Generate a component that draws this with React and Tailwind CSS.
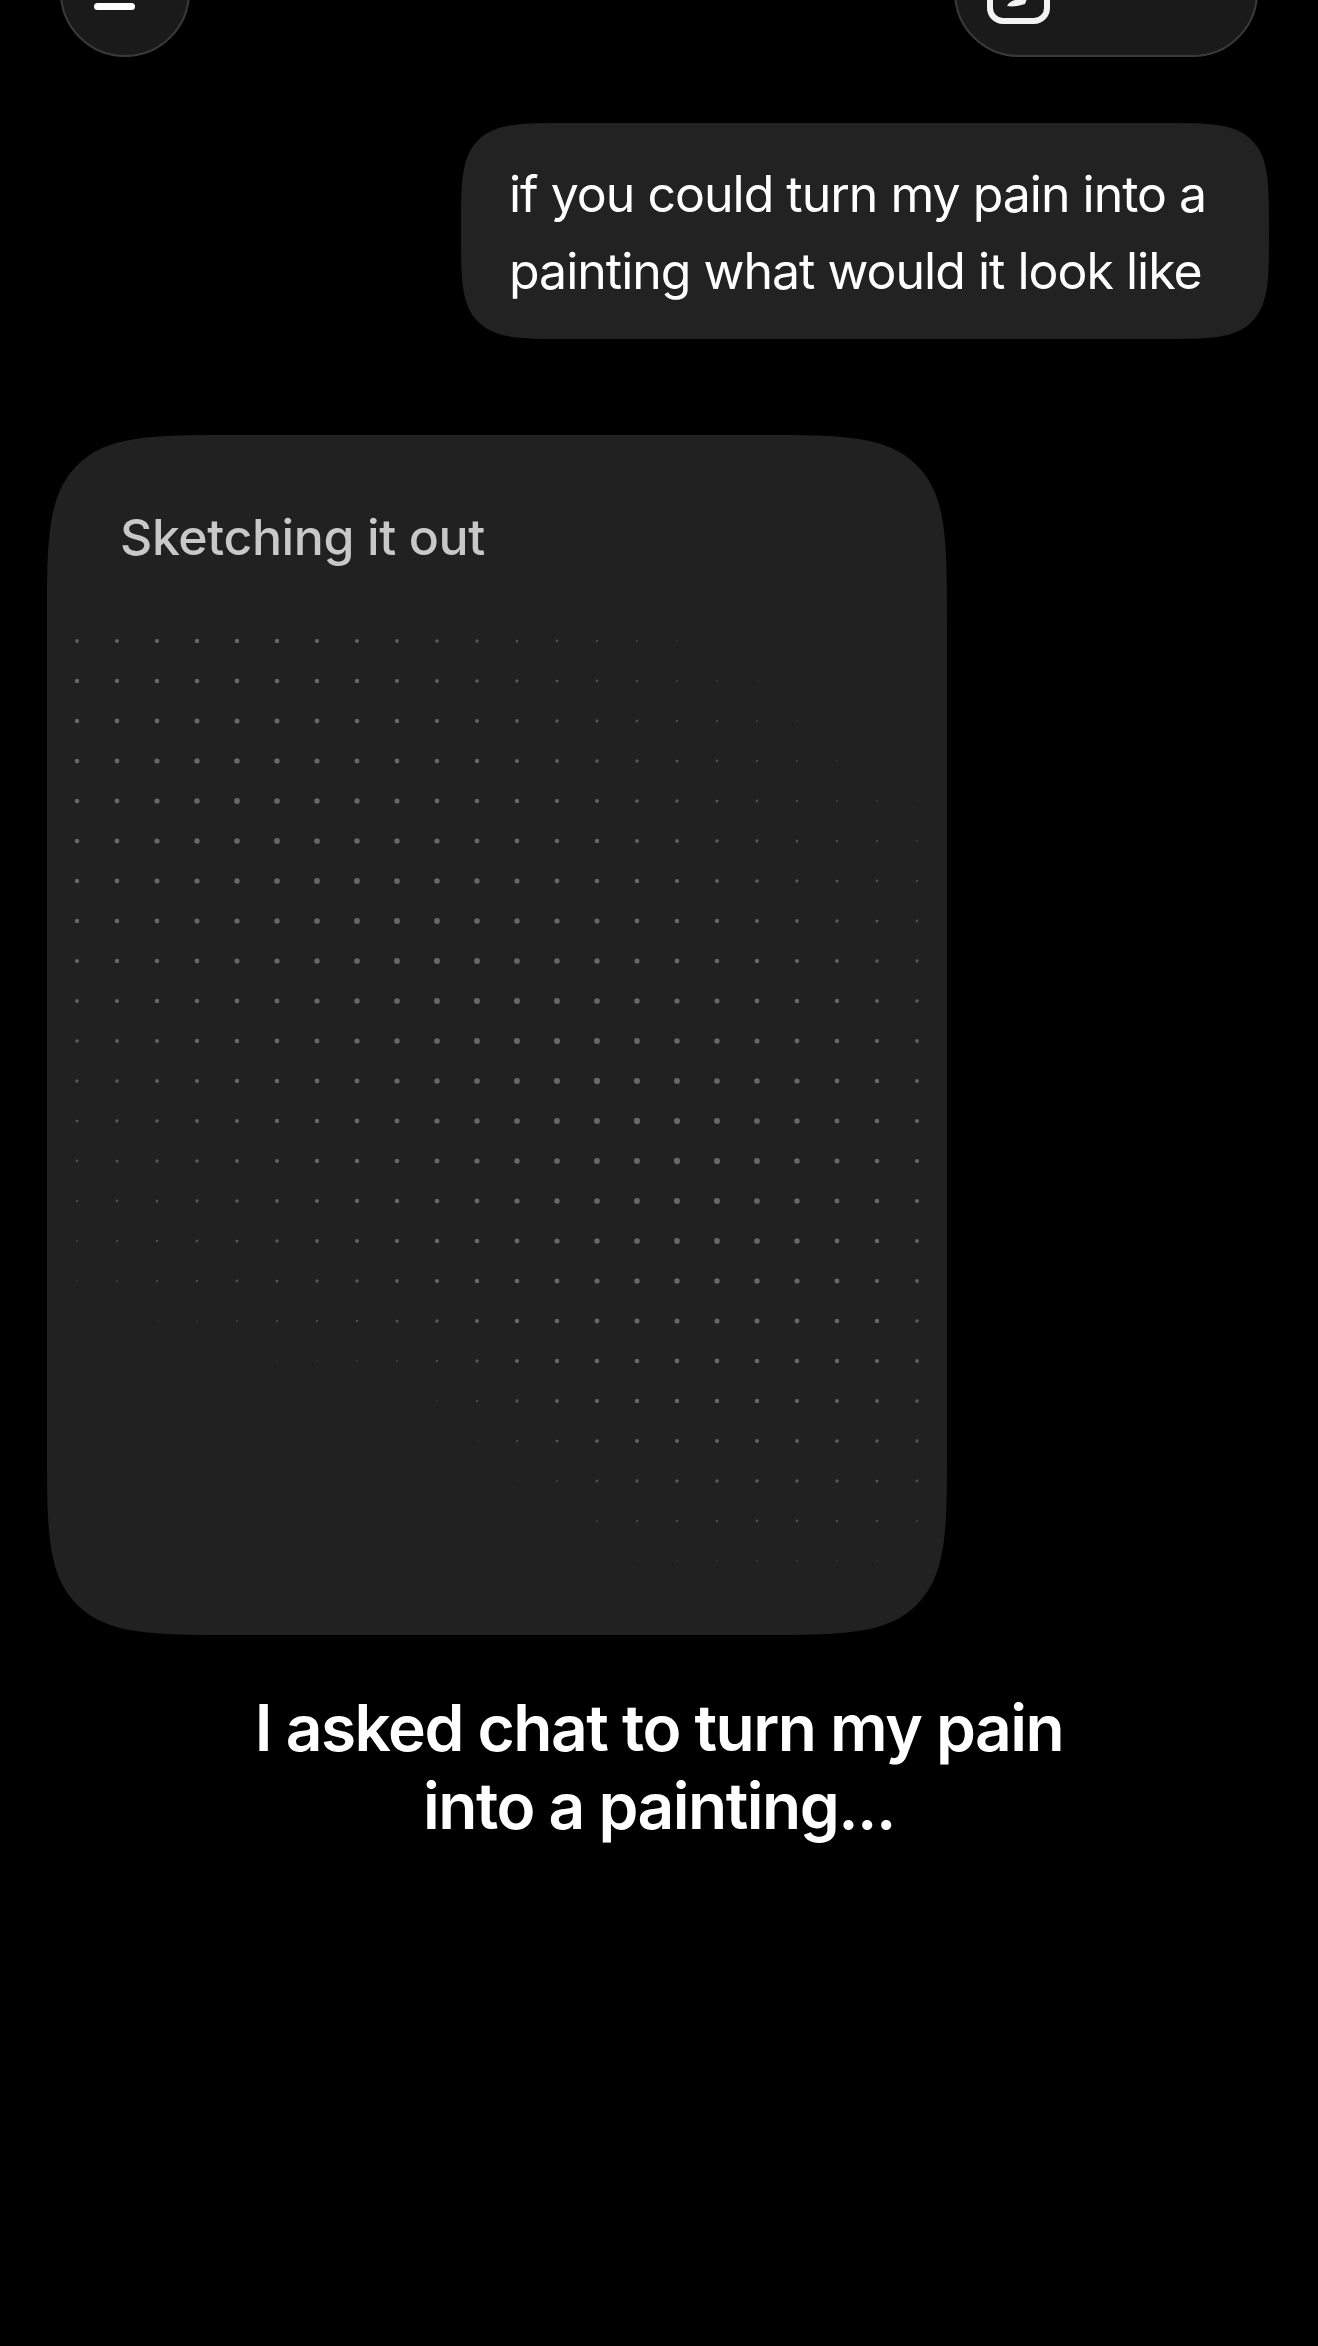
import React from "react";

const rows = Array.from({ length: 24 }, (_, i) => i);
const cols = Array.from({ length: 22 }, (_, i) => i);

// Row at which the field dies out, per column, along the lower-left edge.
const lowerEdge = [16.6, 17, 17.3, 17.6, 18, 18.2, 18.4, 18.6, 19, 19.5, 20.3, 21.2, 22, 22.8, 23.2, 23.4, 23.5, 23.6, 23.6, 23.5, 23.4, 23];

// Dots swell along a ridge from (4,4) to (15.5,13) and fade with distance from it.
function dot(c, r) {
  const x0 = 4, y0 = 4, x1 = 15.5, y1 = 13;
  const dx = x1 - x0, dy = y1 - y0;
  const s = Math.max(0, Math.min(1, ((c - x0) * dx + (r - y0) * dy) / (dx * dx + dy * dy)));
  const d = Math.hypot(c - x0 - s * dx, r - y0 - s * dy);
  const lowerSide = dx * (r - y0) - dy * (c - x0) > 0;
  const t = Math.max(0, 1 - d / (lowerSide ? 13 : 10.8));
  const edge = Math.max(0, (lowerEdge[c] - r) / 7);
  return Math.min(t, edge) * (0.85 + 0.15 * s);
}

function DotField() {
  return (
    <svg width="860" height="960" viewBox="0 0 860 960" className="block">
      {rows.map((r) =>
        cols.map((c) => {
          const t = dot(c, r);
          if (t <= 0.015) return null;
          return (
            <circle
              key={`${r}-${c}`}
              cx={10 + c * 40}
              cy={10 + r * 40}
              r={0.4 + 2.8 * Math.pow(t, 0.7)}
              fill="#686868"
              opacity={Math.min(1, 0.3 + t * 1.4)}
            />
          );
        })
      )}
    </svg>
  );
}

export default function App() {
  return (
    <div className="h-[2346px] overflow-hidden bg-black" style={{ fontFamily: "Inter, 'Liberation Sans', sans-serif" }}>
      <header className="mt-[-73px] flex items-center justify-between px-[60px]">
        <button className="flex h-[130px] w-[130px] flex-col items-start justify-center gap-[22px] rounded-full border-2 border-[#3a3a3a] bg-[#1a1a1a] pl-[32px]">
          <span className="h-[7px] w-[62px] rounded-full bg-white" />
          <span className="h-[7px] w-[41px] rounded-full bg-white" />
        </button>
        <div className="flex h-[130px] w-[304px] items-center rounded-[65px] border-2 border-[#3a3a3a] bg-[#1a1a1a] pl-[31px]">
          <svg width="63" height="64" viewBox="0 0 63 64" fill="none">
            <rect x="3" y="3" width="57" height="58" rx="13" stroke="#f2f2f2" strokeWidth="6" />
            <path d="M20 46 C 24 38 32 41 41 36 L 38 44 C 32 46 26 47 20 46 Z" fill="#f2f2f2" />
          </svg>
        </div>
      </header>

      <div className="mt-[66px] flex justify-end pr-[49px]">
        <div className="w-[808px] whitespace-nowrap rounded-[108px] bg-[#222222] pb-[29px] pl-[48px] pr-[50px] pt-[33px] text-[50px] leading-[77px] tracking-[-1px] text-white [corner-shape:squircle]">
          if you could turn my pain into a
          <br />
          painting what would it look like
        </div>
      </div>

      <div className="ml-[47px] mt-[96px] h-[1200px] w-[900px] rounded-[190px] bg-[#212121] pl-[20px] pt-[73px] [corner-shape:squircle]">
        <p className="pl-[53px] text-[50px] font-medium leading-[58px] tracking-[-0.4px] text-[#c8c8c8]">Sketching it out</p>
        <div className="mt-[65px]">
          <DotField />
        </div>
      </div>

      <h1 className="mt-[54px] whitespace-nowrap text-center text-[64px] font-semibold leading-[78px] tracking-[-1.5px] text-white">
        I asked chat to turn my pain
        <br />
        into a painting...
      </h1>
    </div>
  );
}
